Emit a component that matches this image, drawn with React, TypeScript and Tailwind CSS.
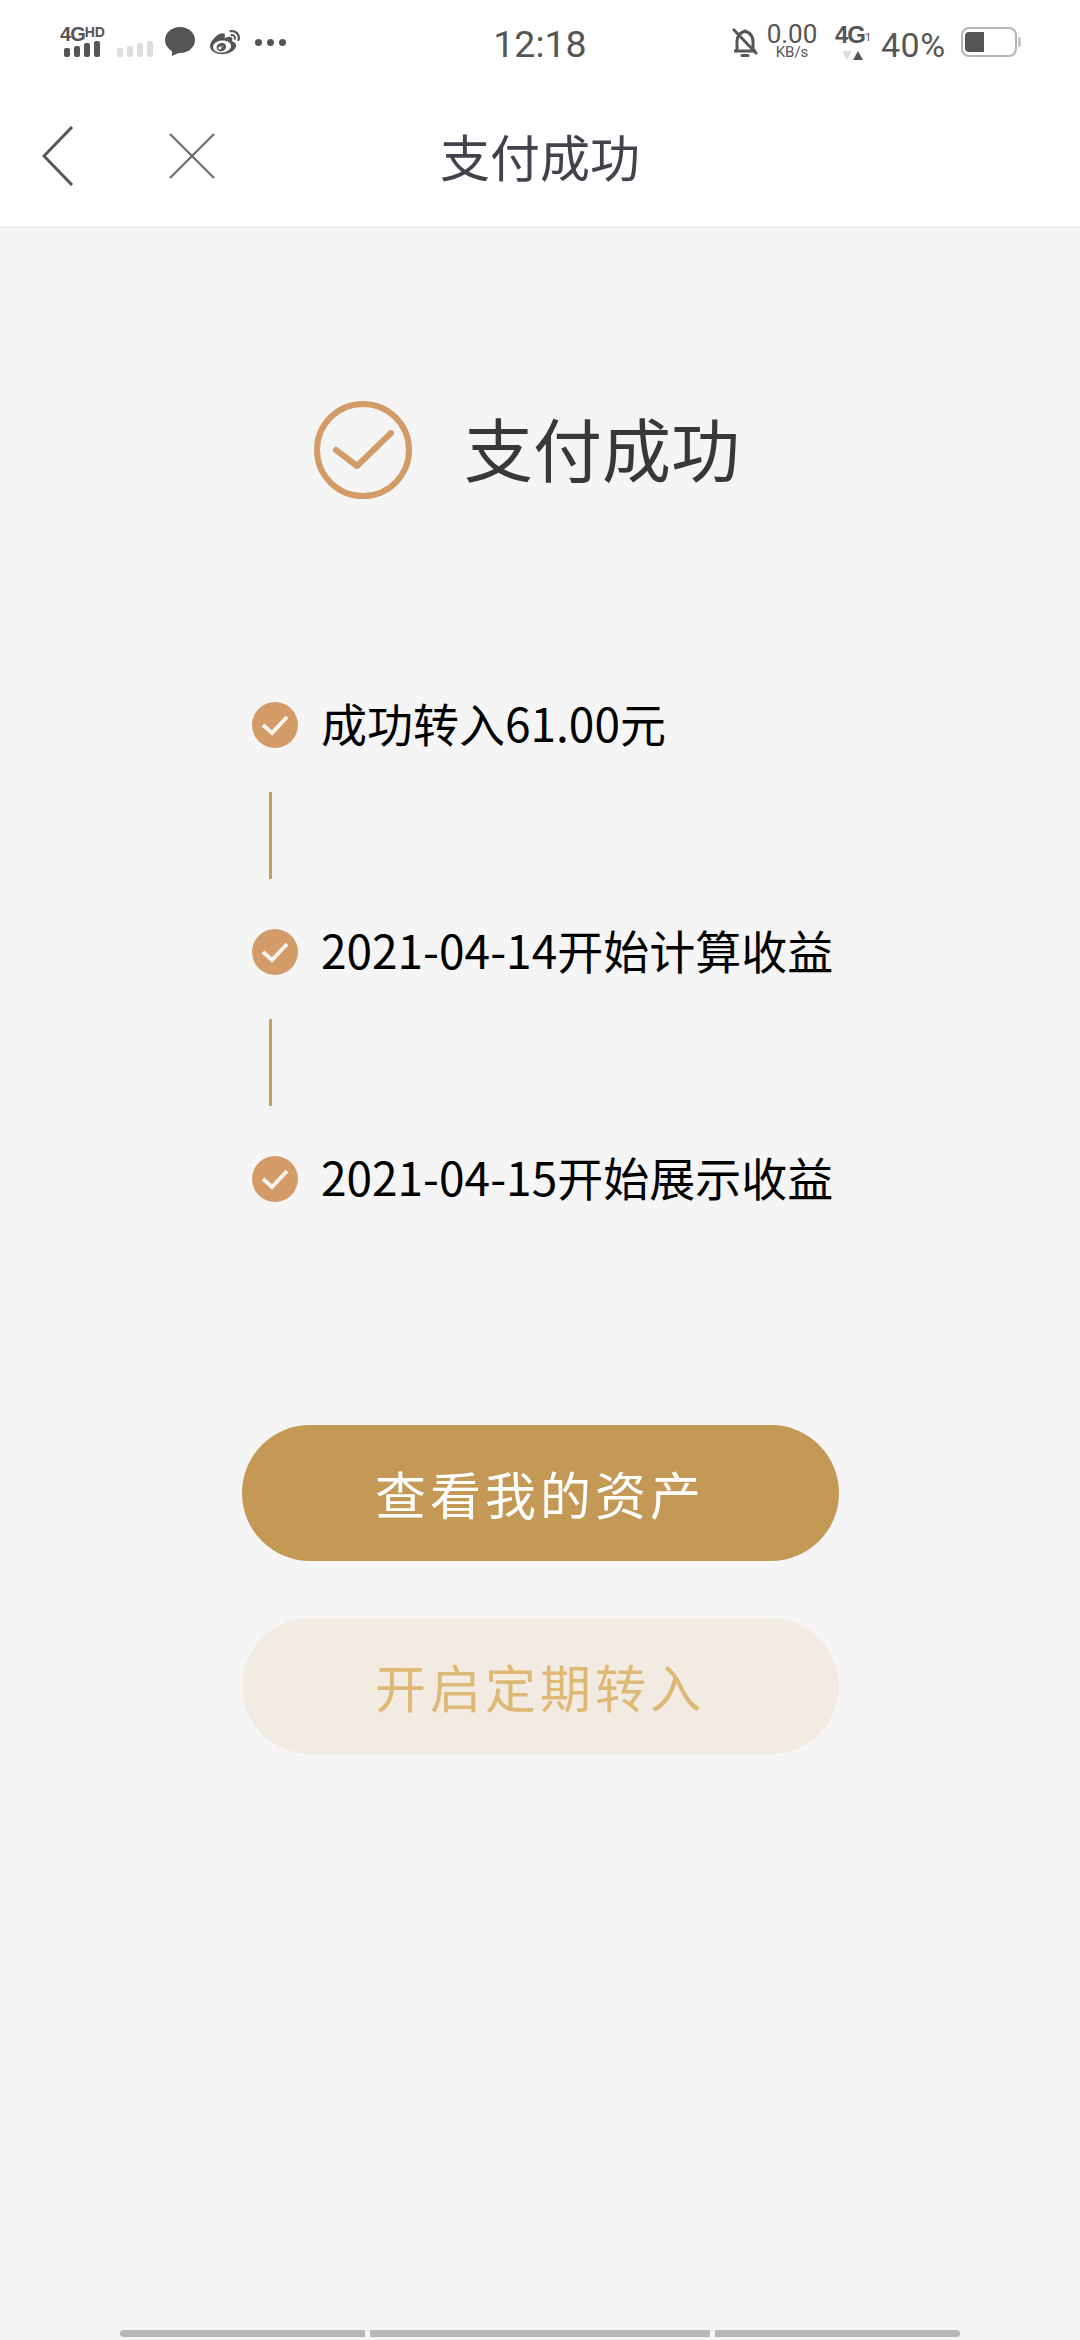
import { FaWeibo } from 'react-icons/fa';

const cjk = "font-['Noto_Sans_CJK_SC','Noto_Sans',sans-serif]";

const steps = ['成功转入61.00元', '2021-04-14开始计算收益', '2021-04-15开始展示收益'];

function SignalBars({ tone }: { tone: string }) {
    const heights = ['h-[9px]', 'h-[11px]', 'h-[14px]', 'h-[16px]'];
    return (
        <div className="flex items-end gap-[4px]">
            {heights.map((h, i) => (
                <div key={i} className={`w-[6px] rounded-[2px] ${h} ${tone}`} />
            ))}
        </div>
    );
}

function StatusBar() {
    return (
        <div className="grid h-[80px] grid-cols-[1fr_auto_1fr] bg-white px-[59px] font-['Roboto',sans-serif] text-[#555555]">
            {/* left icons */}
            <div className="flex items-start pt-[27px]">
                <div className="flex w-[47px] flex-col items-center">
                    <div className="flex h-[14px] items-start font-['Liberation_Sans',sans-serif] text-[20px] leading-[15px] font-bold tracking-[-1px]">
                        4G<span className="text-[14px] leading-[11px] tracking-normal">HD</span>
                    </div>
                    <div className="-ml-[1px]">
                        <SignalBars tone="bg-[#555555]" />
                    </div>
                </div>
                <div className="mt-[14px] ml-[11px]">
                    <SignalBars tone="bg-[#dddddd]" />
                </div>
                <svg className="ml-[12px]" width="30" height="30" viewBox="0 0 30 30">
                    <ellipse cx="15" cy="13" rx="15" ry="13" fill="#555555" />
                    <path d="M7 22 L7 29 L16 25 Z" fill="#555555" />
                </svg>
                <FaWeibo className="mt-[1px] ml-[15px] text-[30px]" />
                <div className="mt-[12px] ml-[15px] flex gap-[5px]">
                    <div className="h-[7px] w-[7px] rounded-full bg-[#555555]" />
                    <div className="h-[7px] w-[7px] rounded-full bg-[#555555]" />
                    <div className="h-[7px] w-[7px] rounded-full bg-[#555555]" />
                </div>
            </div>
            {/* clock */}
            <div className="pt-[24px] text-center text-[37.5px] leading-[40px]">12:18</div>
            {/* right icons */}
            <div className="flex items-start justify-end pt-[24px]">
                <svg className="mt-[4px]" width="26" height="30" viewBox="0 0 26 30" fill="none" stroke="#555555" strokeWidth="3">
                    <path d="M5 23 V13 C5 8 8 5 13 3 C18 5 21 8 21 13 V23 M2 23 H24" />
                    <path d="M1 1 L25 26" />
                    <path d="M10 27.5 H16" strokeLinecap="round" />
                </svg>
                <div className="ml-[9px] flex w-[50px] flex-col items-center">
                    <div className="text-[26px] leading-[21px]">0.00</div>
                    <div className="text-[15px] leading-[15px]">KB/s</div>
                </div>
                <div className="ml-[19px] flex w-[33px] flex-col items-center">
                    <div className="flex items-end font-['Liberation_Sans',sans-serif] text-[24px] leading-[22px] font-bold tracking-[-1px]">
                        4G<span className="font-['Roboto',sans-serif] text-[11px] leading-[16px] font-normal">1</span>
                    </div>
                    <div className="mt-[5px] flex gap-[1px]">
                        <div className="h-0 w-0 border-x-[5px] border-t-[9px] border-x-transparent border-t-[#dddddd]" />
                        <div className="h-0 w-0 border-x-[5px] border-b-[9px] border-x-transparent border-b-[#555555]" />
                    </div>
                </div>
                <div className="mt-[5px] ml-[12px] w-[66px] text-[34px] leading-[32px] tracking-[0.5px]">40%</div>
                <div className="mt-[3px] ml-[14px] flex items-center">
                    <div className="flex h-[30px] w-[56px] items-center rounded-[8px] border-2 border-[#b5b5b5] p-[2px]">
                        <div className="h-[20px] w-[19px] rounded-l-[4px] bg-[#555555]" />
                    </div>
                    <div className="ml-[1px] h-[10px] w-[3px] rounded-r-[2px] bg-[#c8c8c8]" />
                </div>
            </div>
        </div>
    );
}

function NavBar() {
    return (
        <div className="relative flex h-[148px] items-center justify-center border-b border-[#e0e0e0] bg-white">
            <svg className="absolute top-[46px] left-[42px]" width="32" height="60" viewBox="0 0 32 60" fill="none" stroke="#55555f" strokeWidth="3">
                <path d="M30 1 L2 30 L30 59" />
            </svg>
            <svg className="absolute top-[52px] left-[168px]" width="48" height="48" viewBox="0 0 48 48" fill="none" stroke="#66666e" strokeWidth="2">
                <path d="M2 2 L46 46 M46 2 L2 46" />
            </svg>
            <h1 className={`${cjk} mt-[2px] text-[50px] leading-[60px] font-normal text-[#42424c]`}>支付成功</h1>
        </div>
    );
}

function StepDot() {
    return (
        <div className="flex h-[46px] w-[46px] shrink-0 items-center justify-center rounded-full bg-[#d29b67]">
            <svg width="28" height="22" viewBox="0 0 28 22" fill="none" stroke="#fbf3ea" strokeWidth="4">
                <path d="M2 11 L11 19 L26 3" />
            </svg>
        </div>
    );
}

export default function App() {
    return (
        <div className="flex h-[2340px] w-[1080px] flex-col overflow-hidden bg-[#f5f5f5]">
            <StatusBar />
            <NavBar />

            {/* result heading */}
            <div className="mt-[173px] flex items-center pl-[314px]">
                <div className="flex h-[98px] w-[98px] items-center justify-center rounded-full border-[6px] border-[#d29b67]">
                    <svg width="61" height="40" viewBox="0 0 61 40" fill="none" stroke="#d29b67" strokeWidth="6" strokeLinecap="round" strokeLinejoin="round">
                        <path d="M3 20 L24 36 L58 3" />
                    </svg>
                </div>
                <div className={`${cjk} mb-[6px] ml-[52px] text-[69px] leading-[92px] text-[#383838]`}>支付成功</div>
            </div>

            {/* timeline */}
            <div className="mt-[189px] flex flex-col pl-[252px]">
                {steps.map((step, i) => (
                    <div key={step}>
                        {i > 0 && <div className="mt-[30px] mb-[36px] ml-[17px] h-[87px] w-[3px] bg-[#c79c5c]" />}
                        <div className="flex h-[74px] items-center">
                            <StepDot />
                            <div className={`${cjk} mb-[7px] ml-[23px] text-[46px] leading-[60px] text-black`}>{step}</div>
                        </div>
                    </div>
                ))}
            </div>

            {/* actions */}
            <div className="mt-[209px] flex flex-col items-center gap-[57px]">
                <button className={`${cjk} h-[136px] w-[597px] rounded-full bg-[#c49855] text-[51px] tracking-[4px] text-white`}>查看我的资产</button>
                <button className={`${cjk} h-[136px] w-[597px] rounded-full bg-[#f2ebe1] text-[51px] tracking-[4px] text-[#dfb875]`}>开启定期转入</button>
            </div>

            {/* segmented strip at bottom */}
            <div className="mt-auto mb-[3px] ml-[120px] flex w-[840px] gap-[5px]">
                <div className="h-[7px] w-[245px] rounded-l-full bg-[#b8b8b8]" />
                <div className="h-[7px] w-[340px] bg-[#b8b8b8]" />
                <div className="h-[7px] w-[245px] rounded-r-full bg-[#b8b8b8]" />
            </div>
        </div>
    );
}
